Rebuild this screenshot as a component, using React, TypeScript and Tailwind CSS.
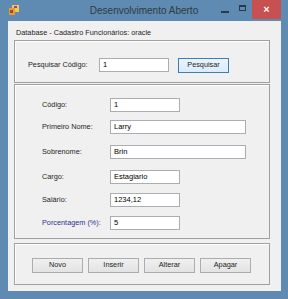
import React from 'react'

const font = { fontFamily: '"Liberation Sans", Arial, sans-serif' }

function Field({ label, value, wide, blue }: { label: string; value: string; wide?: boolean; blue?: boolean }) {
    return (
        <div className='flex items-center h-[14px]'>
            <span className={`w-[68px] text-[7.3px] leading-none ${blue ? 'text-[#2e3192]' : 'text-[#1e1e1e]'}`}>{label}</span>
            <div className={`h-[14px] ${wide ? 'w-[136px]' : 'w-[70px]'} bg-white border border-[#abadb3] flex items-center pl-[3px] text-[7.5px] text-black`}>
                {value}
            </div>
        </div>
    )
}

function Btn({ label }: { label: string }) {
    return (
        <div className='w-[51px] h-[15px] flex items-center justify-center border border-[#acacac] bg-gradient-to-b from-[#f0f0f0] to-[#e3e3e3] text-[7.3px] text-[#1e1e1e]'>
            {label}
        </div>
    )
}

export default function App() {
    return (
        <div style={font} className='w-[288px] h-[299px] bg-[#5f8ab1] flex flex-col'>
            {/* title bar */}
            <div className='h-[21px] flex items-start relative'>
                <svg className='ml-[9px] mt-[5px]' width='10' height='10' viewBox='0 0 10 10'>
                    <rect x='3' y='0' width='7' height='7' fill='#f2c94c' />
                    <rect x='0' y='3' width='6' height='7' fill='#e0a030' />
                    <rect x='1' y='5' width='3' height='3' fill='#c0392b' />
                    <rect x='5' y='1' width='3' height='2' fill='#8e44ad' />
                </svg>
                <div className='absolute left-0 right-0 top-[4px] text-center text-[10px] leading-[14px] text-[#2f3a45]'>
                    Desenvolvimento Aberto
                </div>
                <div className='ml-auto flex items-start'>
                    <div className='w-[8px] h-[2px] bg-[#2a3a4a] mt-[11px] mr-[10px]' />
                    <div className='w-[7px] h-[6px] border border-[#2a3a4a] border-t-2 mt-[5px] mr-[6px]' />
                    <div className='w-[29px] h-[19px] bg-[#c75050] flex items-center justify-center text-white text-[11px] font-bold mr-[7px]'>
                        ×
                    </div>
                </div>
            </div>

            {/* client area */}
            <div className='ml-[8px] mr-[7px] h-[270px] bg-[#f0f0f0] flex flex-col'>
                <div className='h-[19px] pt-[6px] pl-[8px] text-[7.3px] leading-[12px] text-[#1e1e1e]'>
                    Database - Cadastro Funcionários: oracle
                </div>

                <div className='ml-[6px] w-[256px] h-[43px] border border-[#a0a0a0] shadow-[inset_1px_1px_0_#fff] pt-[17px] pl-[13px] flex items-start'>
                    <span className='w-[71px] h-[14px] flex items-center text-[7.3px] text-[#1e1e1e]'>Pesquisar Código:</span>
                    <div className='w-[70px] h-[14px] bg-white border border-[#abadb3] flex items-center pl-[3px] text-[7.5px]'>1</div>
                    <div className='ml-[9px] w-[51px] h-[15px] flex items-center justify-center border border-[#3c7fb1] bg-gradient-to-b from-[#eaf3fb] to-[#dcecfc] text-[7.3px] text-[#1e1e1e]'>
                        Pesquisar
                    </div>
                </div>

                <div className='mt-[1px] ml-[6px] w-[256px] h-[155px] border border-[#a0a0a0] shadow-[inset_1px_1px_0_#fff] pl-[27px] pt-[13px] flex flex-col'>
                    <Field label='Código:' value='1' />
                    <div className='mt-[8px]'><Field label='Primeiro Nome:' value='Larry' wide /></div>
                    <div className='mt-[11px]'><Field label='Sobrenome:' value='Brin' wide /></div>
                    <div className='mt-[11px]'><Field label='Cargo:' value='Estagiario' /></div>
                    <div className='mt-[9px]'><Field label='Salário:' value='1234,12' /></div>
                    <div className='mt-[9px]'><Field label='Porcentagem (%):' value='5' blue /></div>
                </div>

                <div className='mt-[4px] ml-[6px] w-[256px] h-[42px] border border-[#a0a0a0] shadow-[inset_1px_1px_0_#fff] pl-[17px] pt-[14px] flex items-start gap-[5px]'>
                    <Btn label='Novo' />
                    <Btn label='Inserir' />
                    <Btn label='Alterar' />
                    <Btn label='Apagar' />
                </div>
            </div>
        </div>
    )
}
